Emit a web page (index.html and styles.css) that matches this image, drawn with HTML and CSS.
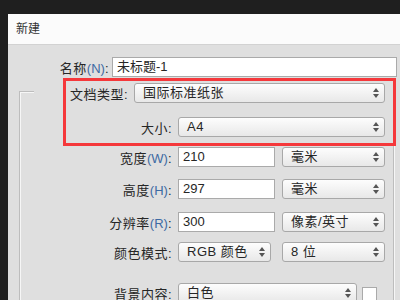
FILE: index.html
```html
<!DOCTYPE html>
<html lang="zh">
<head>
<meta charset="utf-8">
<link rel="stylesheet" href="styles.css">
</head>
<body>
<div class="dialog">
  <div class="titlebar">新建</div>
  <div class="frame"></div>
  <div class="content">
    <div class="row name-row">
      <span class="label">名称<span class="mn">(N)</span>:</span>
      <div class="input name-input">未标题-1</div>
    </div>
    <div class="redbox">
      <div class="row r-type">
        <span class="label">文档类型:</span>
        <div class="sel type-sel">国际标准纸张</div>
      </div>
      <div class="row r-size">
        <span class="label">大小:</span>
        <div class="sel size-sel">A4</div>
      </div>
    </div>
    <div class="row main r-w">
      <span class="label">宽度<span class="mn">(W)</span>:</span>
      <div class="input num">210</div>
      <div class="sel unit">毫米</div>
    </div>
    <div class="row main r-h">
      <span class="label">高度<span class="mn">(H)</span>:</span>
      <div class="input num">297</div>
      <div class="sel unit">毫米</div>
    </div>
    <div class="row main r-r">
      <span class="label">分辨率<span class="mn">(R)</span>:</span>
      <div class="input num">300</div>
      <div class="sel unit">像素/英寸</div>
    </div>
    <div class="row main r-c">
      <span class="label">颜色模式:</span>
      <div class="sel mode">RGB 颜色</div>
      <div class="sel unit bits">8 位</div>
    </div>
    <div class="row main r-b">
      <span class="label">背景内容:</span>
      <div class="sel bg">白色</div>
      <div class="swatch"></div>
    </div>
  </div>
</div>
</body>
</html>
```
FILE: styles.css
```css
* { box-sizing: border-box; }
html, body { height: 300px; }
body {
  margin: 0;
  background: #1f1f1f;
  font-family: "Liberation Sans", "Noto Sans CJK SC", sans-serif;
  font-size: 13px;
  color: #262626;
  overflow: hidden;
}
.dialog {
  margin: 14px 0 0 8px;
  height: 286px;
  background: #dfdfdf;
  position: relative;
  overflow: hidden;
}
.titlebar {
  height: 31px;
  background: #fbfbfb;
  padding-left: 8px;
  line-height: 31px;
  font-size: 12px;
  color: #333;
  border-bottom: 1px solid #d2d2d2;
}
.frame {
  position: absolute;
  left: 11px;
  top: 77px;
  right: 6px;
  bottom: 0;
  border-left: 1px solid #bdbdbd;
  border-right: 1px solid #bdbdbd;
  box-shadow: inset 1px 0 #f6f6f6, 1px 0 #f6f6f6;
}
.frame::before {
  content: "";
  position: absolute;
  left: 0;
  top: 0;
  width: 14px;
  height: 1px;
  background: #bdbdbd;
  box-shadow: 0 1px #f6f6f6;
}
.content {
  position: relative;
  padding-top: 12px;
}
.row {
  display: flex;
  align-items: center;
  height: 20px;
}
.label {
  flex: none;
  text-align: right;
  white-space: nowrap;
  letter-spacing: 0.5px;
}
.mn { color: #3d6aa3; letter-spacing: 0; }
.input {
  flex: none;
  height: 20px;
  background: #fff;
  border: 1px solid #aaa;
  padding-left: 4px;
  line-height: 18px;
}
.sel {
  flex: none;
  position: relative;
  height: 20px;
  border: 1px solid #a8a8a8;
  border-radius: 3px;
  background: linear-gradient(#fdfdfd, #e8e8e8);
  padding-left: 8px;
  line-height: 18px;
  letter-spacing: 0.5px;
}
.sel::before,
.sel::after {
  content: "";
  position: absolute;
  right: 5px;
  border-left: 3px solid transparent;
  border-right: 3px solid transparent;
}
.sel::before {
  top: 4px;
  border-bottom: 4px solid #555;
}
.sel::after {
  bottom: 4px;
  border-top: 4px solid #555;
}
.name-row .label { width: 101px; margin-right: 3px; }
.name-input { width: 285px; }
.redbox {
  margin: 1px 0 0 55px;
  width: 333px;
  height: 68px;
  border: 3px solid #f5383b;
  padding-top: 2px;
}
.r-type .label { width: 62px; margin-right: 6px; }
.type-sel { width: 251px; }
.r-size { margin-top: 14px; }
.r-size .label { width: 106px; margin-right: 6px; }
.size-sel { width: 207px; }
.main .label { width: 164px; margin-right: 6px; }
.num { width: 97px; margin-right: 7px; }
.unit { width: 103px; }
.mode { width: 93px; margin-right: 11px; }
.bg { width: 179px; }
.swatch {
  flex: none;
  width: 15px;
  height: 16px;
  margin-left: 5px;
  margin-top: 3px;
  background: #fff;
  border: 1px solid #aaa;
}
.r-w { margin-top: 1px; }
.r-h { margin-top: 12px; }
.r-r { margin-top: 13px; }
.r-c { margin-top: 10px; }
.r-b { margin-top: 21px; }
```
